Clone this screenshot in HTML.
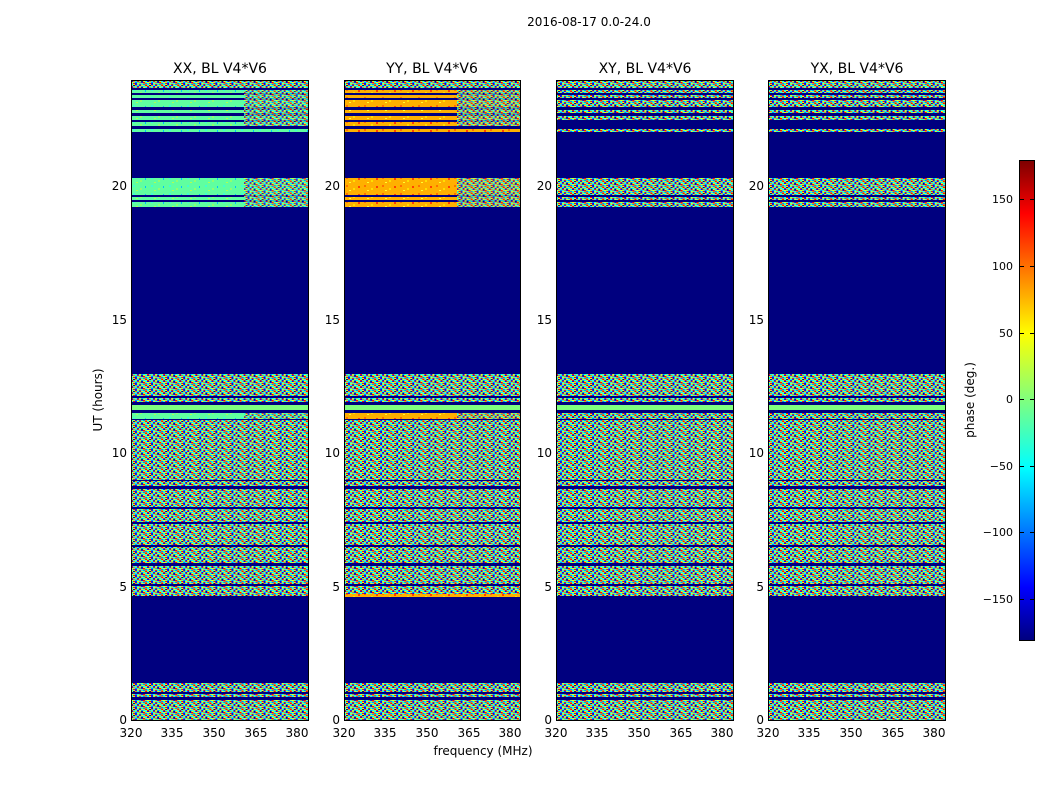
<!DOCTYPE html>
<html><head><meta charset="utf-8"><style>
html,body{margin:0;padding:0;background:#fff;width:1050px;height:800px;overflow:hidden}
svg text{font-family:"DejaVu Sans","Liberation Sans",sans-serif;fill:#000}
</style></head><body>
<svg width="1050" height="800" xmlns="http://www.w3.org/2000/svg">
<defs>
<pattern id="n" width="24" height="12" patternUnits="userSpaceOnUse" patternTransform="scale(0.67,0.5)">
<rect width="24" height="12" fill="#40ffb0"/>
<rect x="0" y="0" width="3" height="2" fill="#00ffff"/><rect x="3" y="0" width="3" height="2" fill="#ffff00"/><rect x="6" y="0" width="3" height="2" fill="#0000ff"/><rect x="9" y="0" width="3" height="2" fill="#7fff7f"/><rect x="12" y="0" width="3" height="2" fill="#ff0000"/><rect x="15" y="0" width="3" height="2" fill="#00ffff"/><rect x="18" y="0" width="3" height="2" fill="#0080ff"/><rect x="21" y="0" width="3" height="2" fill="#ff8000"/>
<rect x="0" y="2" width="3" height="2" fill="#7fff7f"/><rect x="3" y="2" width="3" height="2" fill="#00007f"/><rect x="6" y="2" width="3" height="2" fill="#ff8000"/><rect x="9" y="2" width="3" height="2" fill="#00ffff"/><rect x="12" y="2" width="3" height="2" fill="#0000ff"/><rect x="15" y="2" width="3" height="2" fill="#ffff00"/><rect x="18" y="2" width="3" height="2" fill="#7fff7f"/><rect x="21" y="2" width="3" height="2" fill="#ff0000"/>
<rect x="0" y="4" width="3" height="2" fill="#ff0000"/><rect x="3" y="4" width="3" height="2" fill="#00ffff"/><rect x="6" y="4" width="3" height="2" fill="#7fff7f"/><rect x="9" y="4" width="3" height="2" fill="#0000ff"/><rect x="12" y="4" width="3" height="2" fill="#ffff00"/><rect x="15" y="4" width="3" height="2" fill="#0080ff"/><rect x="18" y="4" width="3" height="2" fill="#00ffff"/><rect x="21" y="4" width="3" height="2" fill="#7fff7f"/>
<rect x="0" y="6" width="3" height="2" fill="#0000ff"/><rect x="3" y="6" width="3" height="2" fill="#ff8000"/><rect x="6" y="6" width="3" height="2" fill="#00ffff"/><rect x="9" y="6" width="3" height="2" fill="#ff0000"/><rect x="12" y="6" width="3" height="2" fill="#7fff7f"/><rect x="15" y="6" width="3" height="2" fill="#00007f"/><rect x="18" y="6" width="3" height="2" fill="#ffff00"/><rect x="21" y="6" width="3" height="2" fill="#00ffff"/>
<rect x="0" y="8" width="3" height="2" fill="#ffff00"/><rect x="3" y="8" width="3" height="2" fill="#7fff7f"/><rect x="6" y="8" width="3" height="2" fill="#0080ff"/><rect x="9" y="8" width="3" height="2" fill="#00ffff"/><rect x="12" y="8" width="3" height="2" fill="#ff8000"/><rect x="15" y="8" width="3" height="2" fill="#0000ff"/><rect x="18" y="8" width="3" height="2" fill="#ff0000"/><rect x="21" y="8" width="3" height="2" fill="#7fff7f"/>
<rect x="0" y="10" width="3" height="2" fill="#00ffff"/><rect x="3" y="10" width="3" height="2" fill="#ff0000"/><rect x="6" y="10" width="3" height="2" fill="#0000ff"/><rect x="9" y="10" width="3" height="2" fill="#ffff00"/><rect x="12" y="10" width="3" height="2" fill="#00ffff"/><rect x="15" y="10" width="3" height="2" fill="#7fff7f"/><rect x="18" y="10" width="3" height="2" fill="#ff8000"/><rect x="21" y="10" width="3" height="2" fill="#0080ff"/>
</pattern>
<pattern id="c" width="18" height="8" patternUnits="userSpaceOnUse">
<rect width="18" height="8" fill="#60ffa0"/>
<rect x="2" y="1" width="2" height="2" fill="#40ffd0"/><rect x="9" y="4" width="2" height="2" fill="#90ff70"/><rect x="14" y="2" width="1" height="2" fill="#00c0ff"/><rect x="5" y="6" width="2" height="1" fill="#b0ff50"/>
</pattern>
<pattern id="o" width="18" height="8" patternUnits="userSpaceOnUse">
<rect width="18" height="8" fill="#ffb000"/>
<rect x="2" y="1" width="2" height="2" fill="#ff7000"/><rect x="9" y="4" width="2" height="2" fill="#ffe000"/><rect x="14" y="2" width="2" height="2" fill="#ff4000"/><rect x="5" y="6" width="2" height="1" fill="#ffff30"/>
</pattern>
<linearGradient id="jet" x1="0" y1="1" x2="0" y2="0">
<stop offset="0" stop-color="#00007f"/><stop offset="0.11" stop-color="#0000ff"/><stop offset="0.36" stop-color="#00ffff"/><stop offset="0.5" stop-color="#7fff7f"/><stop offset="0.64" stop-color="#ffff00"/><stop offset="0.89" stop-color="#ff0000"/><stop offset="1" stop-color="#7f0000"/>
</linearGradient>
<g id="common">
<rect x="0" y="80" width="177" height="640" fill="#00007f"/>
<rect x="0" y="81" width="177" height="7" fill="url(#n)"/>
<rect x="0" y="374" width="177" height="22" fill="url(#n)"/>
<rect x="0" y="398" width="177" height="4" fill="url(#n)"/>
<rect x="0" y="405" width="177" height="5" fill="#7fff7f"/>
<rect x="0" y="420" width="177" height="60" fill="url(#n)"/>
<rect x="0" y="481" width="177" height="5" fill="url(#n)"/>
<rect x="0" y="489" width="177" height="107" fill="url(#n)"/>
<rect x="0" y="507" width="177" height="2" fill="#00007f"/>
<rect x="0" y="522" width="177" height="2" fill="#00007f"/>
<rect x="0" y="545" width="177" height="2" fill="#00007f"/>
<rect x="0" y="563" width="177" height="3" fill="#00007f"/>
<rect x="0" y="584" width="177" height="2" fill="#00007f"/>
<rect x="0" y="683" width="177" height="9" fill="url(#n)"/>
<rect x="0" y="694" width="177" height="3" fill="url(#n)"/>
<rect x="0" y="700" width="177" height="20" fill="url(#n)"/>
</g>
</defs>

<text x="589" y="26" font-size="12" text-anchor="middle">2016-08-17 0.0-24.0</text>

<g transform="translate(131,0)">
<use href="#common"/>
<g fill="url(#c)">
<rect x="0" y="90" width="177" height="3"/><rect x="0" y="95" width="177" height="3"/><rect x="0" y="100" width="177" height="7"/><rect x="0" y="110" width="177" height="3"/><rect x="0" y="116" width="177" height="4"/><rect x="0" y="122" width="177" height="4"/><rect x="0" y="129" width="177" height="3"/><rect x="0" y="178" width="177" height="17"/><rect x="0" y="197" width="177" height="3"/><rect x="0" y="202" width="177" height="5"/><rect x="0" y="413" width="177" height="6"/>
</g>
<g fill="url(#n)" opacity="0.8"><rect x="113" y="90" width="64" height="36"/><rect x="113" y="178" width="64" height="29"/><rect x="113" y="413" width="64" height="6"/></g>
</g>
<g transform="translate(344,0)">
<use href="#common"/>
<g fill="url(#o)">
<rect x="0" y="90" width="177" height="3"/><rect x="0" y="95" width="177" height="3"/><rect x="0" y="100" width="177" height="7"/><rect x="0" y="110" width="177" height="3"/><rect x="0" y="116" width="177" height="4"/><rect x="0" y="122" width="177" height="4"/><rect x="0" y="129" width="177" height="3"/><rect x="0" y="178" width="177" height="17"/><rect x="0" y="197" width="177" height="3"/><rect x="0" y="202" width="177" height="5"/><rect x="0" y="413" width="177" height="6"/><rect x="0" y="594" width="177" height="3"/>
</g>
<g fill="url(#n)" opacity="0.8"><rect x="113" y="90" width="64" height="36"/><rect x="113" y="178" width="64" height="29"/><rect x="113" y="413" width="64" height="6"/></g>
</g>
<g transform="translate(556,0)">
<use href="#common"/>
<g fill="url(#n)">
<rect x="0" y="90" width="177" height="3"/><rect x="0" y="95" width="177" height="3"/><rect x="0" y="100" width="177" height="7"/><rect x="0" y="110" width="177" height="3"/><rect x="0" y="116" width="177" height="4"/><rect x="0" y="129" width="177" height="3"/><rect x="0" y="178" width="177" height="17"/><rect x="0" y="197" width="177" height="3"/><rect x="0" y="202" width="177" height="5"/><rect x="0" y="413" width="177" height="6"/>
</g>
</g>
<g transform="translate(768,0)">
<use href="#common"/>
<g fill="url(#n)">
<rect x="0" y="90" width="177" height="3"/><rect x="0" y="95" width="177" height="3"/><rect x="0" y="100" width="177" height="7"/><rect x="0" y="110" width="177" height="3"/><rect x="0" y="116" width="177" height="4"/><rect x="0" y="129" width="177" height="3"/><rect x="0" y="178" width="177" height="17"/><rect x="0" y="197" width="177" height="3"/><rect x="0" y="202" width="177" height="5"/><rect x="0" y="413" width="177" height="6"/>
</g>
</g>

<g fill="none" stroke="#000" stroke-width="1">
<rect x="131.5" y="80.5" width="177" height="640"/>
<rect x="344.5" y="80.5" width="176" height="640"/>
<rect x="556.5" y="80.5" width="177" height="640"/>
<rect x="768.5" y="80.5" width="177" height="640"/>
<rect x="1019.5" y="160.5" width="15" height="480"/>
</g>
<rect x="1020" y="161" width="14" height="479" fill="url(#jet)"/>
<g font-size="14" text-anchor="middle">
<text x="220" y="73">XX, BL V4*V6</text>
<text x="432" y="73">YY, BL V4*V6</text>
<text x="645" y="73">XY, BL V4*V6</text>
<text x="857" y="73">YX, BL V4*V6</text>
</g>
<g font-size="12" text-anchor="end">
<text x="127" y="724">0</text><text x="127" y="591">5</text><text x="127" y="457">10</text><text x="127" y="324">15</text><text x="127" y="190">20</text>
<text x="340" y="724">0</text><text x="340" y="591">5</text><text x="340" y="457">10</text><text x="340" y="324">15</text><text x="340" y="190">20</text>
<text x="552" y="724">0</text><text x="552" y="591">5</text><text x="552" y="457">10</text><text x="552" y="324">15</text><text x="552" y="190">20</text>
<text x="764" y="724">0</text><text x="764" y="591">5</text><text x="764" y="457">10</text><text x="764" y="324">15</text><text x="764" y="190">20</text>
</g>
<g font-size="12" text-anchor="middle">
<text x="131" y="737">320</text><text x="172" y="737">335</text><text x="214" y="737">350</text><text x="256" y="737">365</text><text x="297" y="737">380</text>
<text x="344" y="737">320</text><text x="385" y="737">335</text><text x="427" y="737">350</text><text x="469" y="737">365</text><text x="510" y="737">380</text>
<text x="556" y="737">320</text><text x="597" y="737">335</text><text x="639" y="737">350</text><text x="681" y="737">365</text><text x="722" y="737">380</text>
<text x="768" y="737">320</text><text x="809" y="737">335</text><text x="851" y="737">350</text><text x="893" y="737">365</text><text x="934" y="737">380</text>
<text x="483" y="755">frequency (MHz)</text>
</g>
<text x="0" y="0" font-size="12" text-anchor="middle" transform="translate(102,400) rotate(-90)">UT (hours)</text>
<text x="0" y="0" font-size="12" text-anchor="middle" transform="translate(974,400) rotate(-90)">phase (deg.)</text>
<g font-size="11" text-anchor="end">
<text x="1013" y="203">150</text><text x="1013" y="270">100</text><text x="1013" y="337">50</text><text x="1013" y="403">0</text><text x="1013" y="470">−50</text><text x="1013" y="536">−100</text><text x="1013" y="603">−150</text>
</g>
<g stroke="#000"><line x1="1020" y1="199.5" x2="1024" y2="199.5"/><line x1="1030" y1="199.5" x2="1034" y2="199.5"/><line x1="1020" y1="266.5" x2="1024" y2="266.5"/><line x1="1030" y1="266.5" x2="1034" y2="266.5"/><line x1="1020" y1="333.5" x2="1024" y2="333.5"/><line x1="1030" y1="333.5" x2="1034" y2="333.5"/><line x1="1020" y1="399.5" x2="1024" y2="399.5"/><line x1="1030" y1="399.5" x2="1034" y2="399.5"/><line x1="1020" y1="466.5" x2="1024" y2="466.5"/><line x1="1030" y1="466.5" x2="1034" y2="466.5"/><line x1="1020" y1="532.5" x2="1024" y2="532.5"/><line x1="1030" y1="532.5" x2="1034" y2="532.5"/><line x1="1020" y1="599.5" x2="1024" y2="599.5"/><line x1="1030" y1="599.5" x2="1034" y2="599.5"/></g>
</svg>
</body></html>
